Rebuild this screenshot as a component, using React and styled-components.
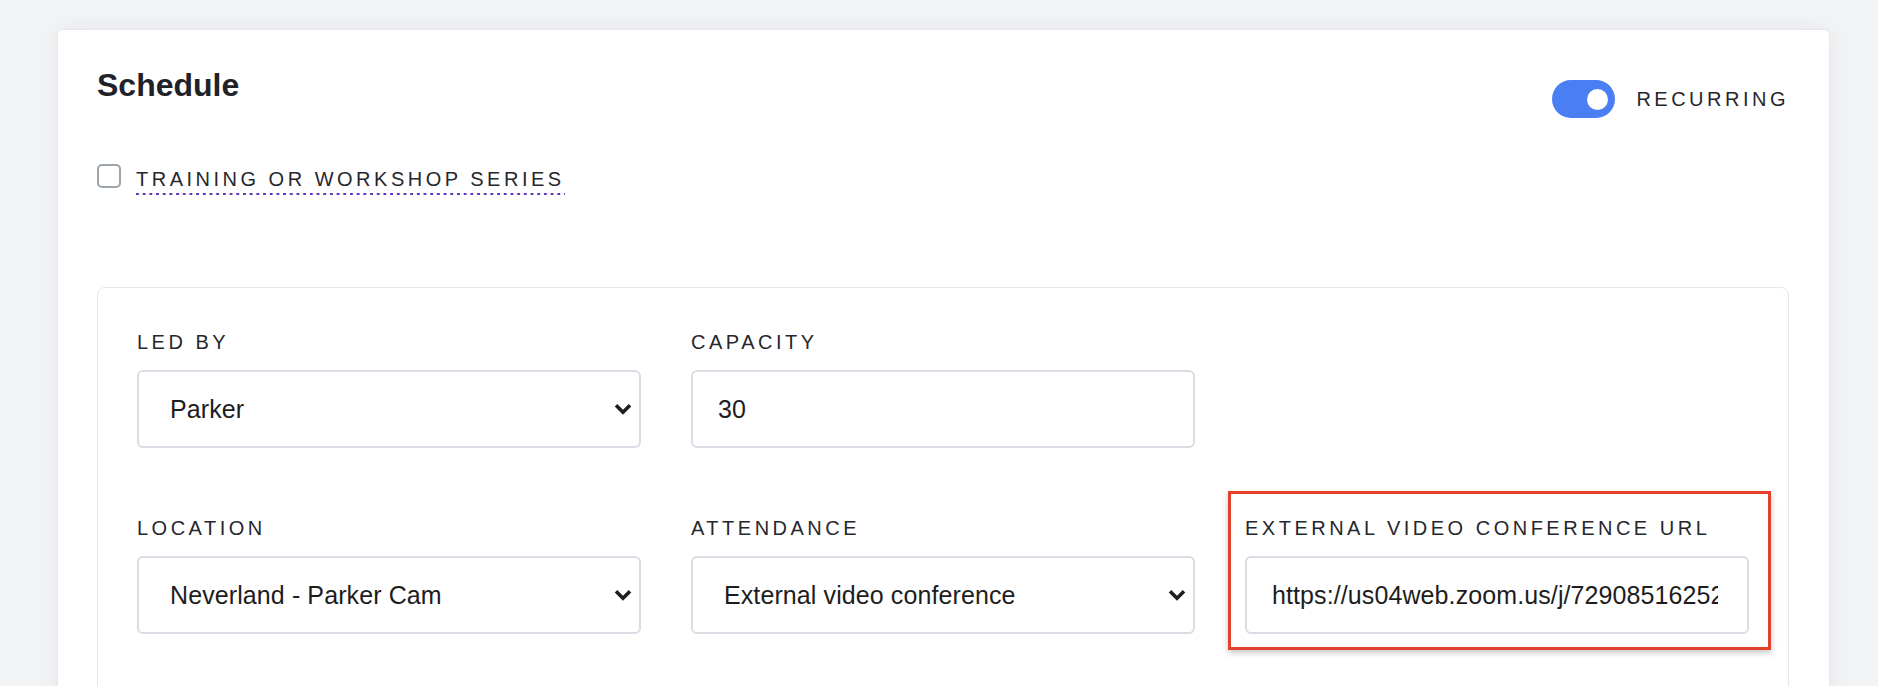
import React, { useState } from "react";
import styled, { createGlobalStyle } from "styled-components";

const GlobalStyle = createGlobalStyle`
  html, body {
    margin: 0;
    padding: 0;
    background: #f2f3f5;
    overflow: hidden;
  }
  * {
    box-sizing: border-box;
  }
`;

const FONT = `"Liberation Sans", Arial, Helvetica, sans-serif`;

const Page = styled.div`
  height: 686px;
  padding: 29px 48px 0 57px;
  font-family: ${FONT};
`;

const Card = styled.section`
  background: #fff;
  border: 1px solid #e5e7eb;
  border-radius: 6px;
  box-shadow: 0 0 24px rgba(20, 30, 50, 0.05);
  padding: 37px 40px 60px 39px;
`;

const Header = styled.div`
  display: flex;
  justify-content: space-between;
  align-items: flex-start;
`;

const Title = styled.h2`
  margin: 0;
  font-size: 32px;
  line-height: 37px;
  font-weight: 700;
  color: #212228;
`;

const ToggleGroup = styled.label`
  display: flex;
  align-items: center;
  gap: 21px;
  margin-top: 13px;
  cursor: pointer;
`;

const Switch = styled.span`
  position: relative;
  width: 63px;
  height: 38px;
  border-radius: 19px;
  background: ${({ on }) => (on ? "#4a7ff3" : "#d1d5db")};
  transition: background 0.15s ease;
`;

const Knob = styled.span`
  position: absolute;
  top: 8.5px;
  left: ${({ on }) => (on ? "35px" : "7px")};
  width: 21px;
  height: 21px;
  border-radius: 50%;
  background: #fff;
  transition: left 0.15s ease;
`;

const CapsText = styled.span`
  font-size: 20px;
  line-height: 24px;
  letter-spacing: 3.5px;
  text-transform: uppercase;
  color: #26272d;
`;

const SeriesRow = styled.label`
  display: flex;
  align-items: flex-start;
  gap: 15px;
  margin-top: 46px;
  cursor: pointer;
`;

const Checkbox = styled.input.attrs({ type: "checkbox" })`
  appearance: none;
  margin: 0;
  width: 24px;
  height: 24px;
  border: 2px solid #9ca4ae;
  border-radius: 5px;
  background: #fff;
  cursor: pointer;
  &:checked {
    background: #4a7ff3;
    border-color: #4a7ff3;
  }
`;

const SeriesLabel = styled(CapsText)`
  margin-top: 3px;
  padding-bottom: 4px;
  background-image: linear-gradient(to right, #5e36c0 2.5px, transparent 2.5px);
  background-size: 6.7px 2px;
  background-repeat: repeat-x;
  background-position: 0 100%;
`;

const Panel = styled.div`
  margin-top: 92px;
  border: 1px solid #e3e6ea;
  border-radius: 8px;
  padding: 42px 39px 80px 39px;
`;

const FieldGrid = styled.div`
  display: grid;
  grid-template-columns: repeat(3, 504px);
  column-gap: 50px;
  row-gap: 68px;
`;

const Field = styled.div`
  position: relative;
  display: flex;
  flex-direction: column;
  gap: 16px;

  ${({ highlighted }) =>
    highlighted &&
    `
    &::after {
      content: "";
      position: absolute;
      top: -25px;
      left: -17px;
      right: -22px;
      bottom: -16px;
      border: 3px solid #e5402b;
      box-shadow: 0 3px 6px rgba(0, 0, 0, 0.22);
      pointer-events: none;
    }
  `}
`;

const FieldLabel = styled(CapsText).attrs({ as: "label" })`
  display: block;
`;

const SelectWrap = styled.div`
  position: relative;
`;

const controlBase = `
  width: 100%;
  height: 78px;
  border: 2px solid #d9dde3;
  border-radius: 6px;
  background: #fff;
  font-family: ${FONT};
  font-size: 25px;
  letter-spacing: 0.1px;
  color: #1d1d20;
  outline: none;
`;

const Select = styled.select`
  ${controlBase}
  appearance: none;
  padding: 0 48px 0 31px;
  cursor: pointer;
`;

const Chevron = styled.svg`
  position: absolute;
  right: 9px;
  top: 50%;
  width: 18px;
  height: 12px;
  transform: translateY(-50%);
  pointer-events: none;
`;

const TextInput = styled.input`
  ${controlBase}
  padding: 0 29px 0 25px;
`;

function SelectField({ id, label, value, options, onChange }) {
  return (
    <Field>
      <FieldLabel htmlFor={id}>{label}</FieldLabel>
      <SelectWrap>
        <Select id={id} value={value} onChange={onChange}>
          {options.map((o) => (
            <option key={o}>{o}</option>
          ))}
        </Select>
        <Chevron viewBox="0 0 18 12">
          <path d="M2 2.2 L9 9.2 L16 2.2" fill="none" stroke="#1f1f22" strokeWidth="3.6" />
        </Chevron>
      </SelectWrap>
    </Field>
  );
}

export default function App() {
  const [recurring, setRecurring] = useState(true);
  const [series, setSeries] = useState(false);
  const [form, setForm] = useState({
    ledBy: "Parker",
    capacity: "30",
    location: "Neverland - Parker Cam",
    attendance: "External video conference",
    url: "https://us04web.zoom.us/j/72908516252?pwd=dGZ3bW1",
  });

  const set = (key) => (e) => setForm({ ...form, [key]: e.target.value });

  return (
    <Page>
      <GlobalStyle />
      <Card>
        <Header>
          <Title>Schedule</Title>
          <ToggleGroup onClick={() => setRecurring(!recurring)}>
            <Switch on={recurring ? 1 : 0}>
              <Knob on={recurring ? 1 : 0} />
            </Switch>
            <CapsText>Recurring</CapsText>
          </ToggleGroup>
        </Header>

        <SeriesRow>
          <Checkbox checked={series} onChange={(e) => setSeries(e.target.checked)} />
          <SeriesLabel>Training or workshop series</SeriesLabel>
        </SeriesRow>

        <Panel>
          <FieldGrid>
            <SelectField
              id="led-by"
              label="Led by"
              value={form.ledBy}
              options={["Parker", "Wendy", "Hook"]}
              onChange={set("ledBy")}
            />
            <Field>
              <FieldLabel htmlFor="capacity">Capacity</FieldLabel>
              <TextInput id="capacity" value={form.capacity} onChange={set("capacity")} />
            </Field>
            <div />

            <SelectField
              id="location"
              label="Location"
              value={form.location}
              options={["Neverland - Parker Cam", "Neverland - Main Hall"]}
              onChange={set("location")}
            />
            <SelectField
              id="attendance"
              label="Attendance"
              value={form.attendance}
              options={["In person", "External video conference"]}
              onChange={set("attendance")}
            />
            <Field highlighted>
              <FieldLabel htmlFor="url">External video conference URL</FieldLabel>
              <TextInput id="url" value={form.url} onChange={set("url")} />
            </Field>
          </FieldGrid>
        </Panel>
      </Card>
    </Page>
  );
}
